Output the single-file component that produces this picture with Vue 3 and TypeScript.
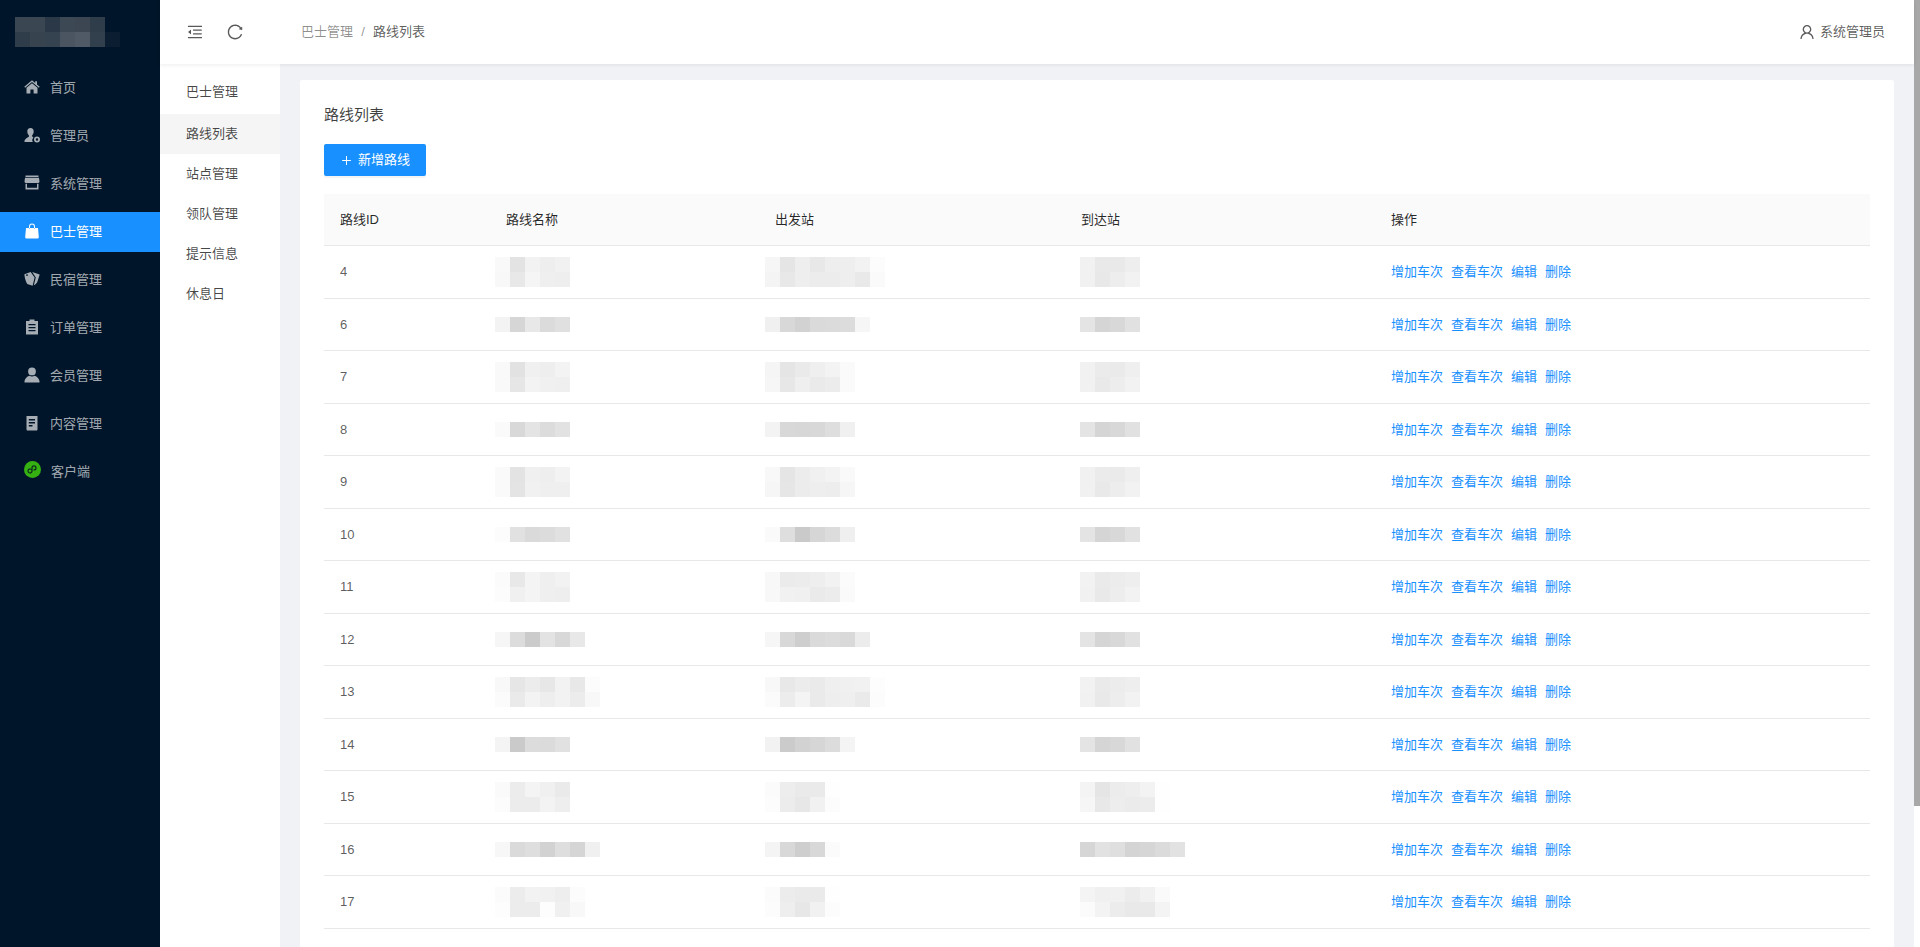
<script setup lang="ts">
import { ref } from 'vue'

// mosaics are written as gray tones, "|" starts a second line of blocks
const toColor = (t: string) => `#${t}${t}${t}`
const parseTiles = (s: string) => s.split('|').map((line) => line.split(' ').map(toColor))

const logoTiles = [
  ['#3a4753', '#3a4652', '#2b3847', '#3c4854', '#3b4652', '#2f3c49', 'transparent'],
  ['#2f3d4b', '#37434f', '#354250', '#4a5561', '#4f5a66', '#323f4c', '#0b1e31'],
]

const sideMenu = [
  { label: '首页', icon: 'M8 1.2 11.2 3.9V2.2H13V5.4L15.7 7.7 14.9 8.7 8 3 1.1 8.7.3 7.7ZM8 4.2 13.5 8.8V14.5H9.6V10.4H6.4V14.5H2.5V8.8Z' },
  { label: '管理员', icon: 'M6.5 1a3.2 3.6 0 0 1 3.2 3.6c0 1.6-.7 3-1.6 3.8v1.2c.4.2.9.4 1.3.6a4.5 4.5 0 0 0-.6 4.8H.5v-1.3c0-1.5 2.8-3 4.4-4V8.4C4 7.6 3.3 6.2 3.3 4.6A3.2 3.6 0 0 1 6.5 1ZM13 9.5a3 3 0 1 1 0 6 3 3 0 1 1 0-6ZM13 11.3a1.2 1.2 0 1 0 0 2.4 1.2 1.2 0 1 0 0-2.4Z' },
  { label: '系统管理', icon: 'M1.5.5H14.5V2H1.5ZM1 2.8H15L15.5 6.5C15.5 7.5 14.5 8 13.5 8H2.5C1.5 8 .5 7.5.5 6.5ZM1.5 8.8H3V12.8H13V8.8H14.5V14.5H1.5Z' },
  { label: '巴士管理', active: true, icon: 'M5 5.5V3.6a3 3 0 0 1 6 0V5.5H10V3.6a2 2 0 0 0-4 0V5.5ZM2 5H14L14.8 14a1.4 1.4 0 0 1-1.4 1.5H2.6A1.4 1.4 0 0 1 1.2 14Z' },
  { label: '民宿管理', icon: 'M.4 3.2 6.6.9 10.6 6.6 8.6 14.7 3.2 12.9C1.6 10 .6 6.6.4 3.2ZM3 3.2a.9.9 0 1 0 0 1.8.9.9 0 1 0 0-1.8ZM8.2 1 15.7 3.4 13.2 11.2C12.6 12.4 11.2 13.4 9.8 14.3L11.8 6.4Z' },
  { label: '订单管理', icon: 'M5.5.5H10.5V2H14V15.5H2V2H5.5ZM4.5 5V6.2H11.5V5ZM4.5 8V9.2H11.5V8ZM4.5 11V12.2H11.5V11Z' },
  { label: '会员管理', icon: 'M8 .5a3.9 3.9 0 1 1 0 7.8 3.9 3.9 0 1 1 0-7.8ZM5.3 8.8C6.8 9.8 9.2 9.8 10.7 8.8 13 9.6 15 11.5 15.5 14V15.5H.5V14C1 11.5 3 9.6 5.3 8.8Z' },
  { label: '内容管理', icon: 'M2.5 1H13.5V14.5C13.5 15 13 15.5 12.5 15.5H3.5C3 15.5 2.5 15 2.5 14.5ZM4.8 4V5.4H11V4ZM4.8 7V8.4H11V7ZM4.8 10V11.4H8.5V10Z' },
  { label: '客户端', mini: true },
]

const subMenu = ['巴士管理', '路线列表', '站点管理', '领队管理', '提示信息', '休息日']
const activeSub = ref('路线列表')

const routes = [
  { id: 4, name: 'f9 e3 f2 ee f1|f8 e8 f5 ef ee', from: 'f6 e5 ee e8 ee ee f2 fc|f4 e8 ee ec ec ee e9 fa', to: 'f1 e9 e9 ee|f1 e8 ed f2' },
  { id: 6, name: 'f3 d6 e8 db e0', from: 'f0 d8 d2 da db dc f6', to: 'e4 d5 d8 e1' },
  { id: 7, name: 'f9 e2 f0 ee f3|f9 e6 f3 f0 ef', from: 'f5 e5 ea ef f3 fa|f6 e7 ef ea ec fa', to: 'f1 eb ea ef|f1 e9 ed f2' },
  { id: 8, name: 'fa d8 e4 dc e2', from: 'f3 d8 d7 d8 de f0', to: 'e4 d5 d8 e1' },
  { id: 9, name: 'fa e3 f0 ee f3|fa e4 f1 ef ef', from: 'f8 e5 ec f0 f3 f9|f6 e6 ec ee ed f6', to: 'f1 eb ea ef|f1 e9 ed f2' },
  { id: 10, name: 'fc e1 da dc e1', from: 'fa de ca d6 dc ef', to: 'e4 d5 d8 e1' },
  { id: 11, name: 'fb e8 f4 ef f2|fc f0 f4 ef ee', from: 'f8 eb ec ee f2 fb|f8 f1 f0 ea ec fa', to: 'f2 ea ec ee|f1 e9 ed f2' },
  { id: 12, name: 'f6 dc cb e3 d8 e8', from: 'f6 d8 ce da dc d9 ec', to: 'e4 d5 d8 e1' },
  { id: 13, name: 'f8 e6 ec e7 f2 e8 fc|fb ea f3 ee f2 ec f8', from: 'f8 e8 ec ea ef f0 f1 fd|fb ec f4 ea ee ef ea fc', to: 'f2 ea ec ee|f1 e9 ed f2' },
  { id: 14, name: 'f4 ca dc db e1', from: 'f2 cb d2 d6 dc f4', to: 'e4 d5 d8 e1' },
  { id: 15, name: 'fa ec f4 f0 ea|fc ec ec f3 ee', from: 'fb ed ea ea fe|fc ec e7 f1 fc', to: 'f4 e5 ec ee f3 fe|f6 e8 ed eb ec fe' },
  { id: 16, name: 'f7 da de d2 de d5 f0', from: 'f4 d8 ce d8 fb', to: 'd6 e2 df d4 d6 db e2' },
  { id: 17, name: 'fb ec f2 f1 ee fc|fd ec ec fd f0 f8', from: 'fb ec ea ea fe|fc ee e7 f1 fc', to: 'f4 f0 f1 ec f1 fa|fb f3 ec e9 e9 f4' },
]

const actions = ['增加车次', '查看车次', '编辑', '删除']
</script>

<template>
  <div class="layout">
    <aside class="sider">
      <div class="logo">
        <div v-for="(line, i) in logoTiles" :key="i" class="tile-line">
          <span v-for="(c, j) in line" :key="j" class="tile" :style="{ background: c }"></span>
        </div>
      </div>
      <nav class="side-menu">
        <a v-for="item in sideMenu" :key="item.label" class="side-item" :class="{ active: item.active }">
          <svg v-if="item.mini" class="side-icon mini" viewBox="0 0 17 17">
            <circle cx="8.5" cy="8.5" r="8.5" fill="#35b212" />
            <path d="M6.9 8.2a2 2 0 1 0 1.1 1.9V6.9a2 2 0 1 1 2 2" fill="none" stroke="#0b2a1c" stroke-width="1.2" stroke-linecap="round" />
          </svg>
          <svg v-else class="side-icon" viewBox="0 0 16 16">
            <path :d="item.icon" fill="currentColor" fill-rule="evenodd" />
          </svg>
          <span>{{ item.label }}</span>
        </a>
      </nav>
    </aside>

    <div class="body">
      <header class="topbar">
        <div class="topbar-left">
          <svg class="top-icon" viewBox="0 0 1024 1024">
            <path fill="currentColor" d="M408 442h480c4.4 0 8-3.6 8-8v-56c0-4.4-3.6-8-8-8H408c-4.4 0-8 3.6-8 8v56c0 4.4 3.6 8 8 8zm-8 204c0 4.4 3.6 8 8 8h480c4.4 0 8-3.6 8-8v-56c0-4.4-3.6-8-8-8H408c-4.4 0-8 3.6-8 8v56zm504-486H120c-4.4 0-8 3.6-8 8v56c0 4.4 3.6 8 8 8h784c4.4 0 8-3.6 8-8v-56c0-4.4-3.6-8-8-8zm0 632H120c-4.4 0-8 3.6-8 8v56c0 4.4 3.6 8 8 8h784c4.4 0 8-3.6 8-8v-56c0-4.4-3.6-8-8-8zM115.4 518.9L271.7 642c5.8 4.6 14.4.5 14.4-6.9V388.9c0-7.4-8.5-11.5-14.4-6.9L115.4 505.1a8.74 8.74 0 0 0 0 13.8z" />
          </svg>
          <svg class="top-icon" viewBox="0 0 1024 1024">
            <path fill="currentColor" d="M909.1 209.3l-56.4 44.1C775.8 155.1 656.2 92 521.9 92 290 92 102.3 279.5 102 511.5 101.7 743.7 289.8 932 521.9 932c181.3 0 335.8-115 394.6-276.1 1.5-4.2-.7-8.9-4.9-10.3l-56.7-19.5a8 8 0 0 0-10.1 4.8c-1.8 5-3.8 10-5.9 14.9-17.3 41-42.1 77.8-73.7 109.4A344.77 344.77 0 0 1 655.9 829c-42.3 17.9-87.4 27-133.8 27-46.5 0-91.5-9.1-133.8-27A341.5 341.5 0 0 1 279 755.2a342.16 342.16 0 0 1-73.7-109.4c-17.9-42.4-27-87.4-27-133.9s9.1-91.5 27-133.9c17.3-41 42.1-77.8 73.7-109.4 31.6-31.6 68.4-56.4 109.3-73.8 42.3-17.9 87.4-27 133.8-27 46.5 0 91.5 9.1 133.8 27a341.5 341.5 0 0 1 109.3 73.8c9.9 9.9 19.2 20.4 27.8 31.4l-60.2 47a8 8 0 0 0 3 14.1l175.6 43c5 1.2 9.9-2.6 9.9-7.7l.8-180.9c-.1-6.6-7.8-10.3-13-6.2z" />
          </svg>
          <div class="crumbs">
            <span class="crumb-link">巴士管理</span>
            <span class="crumb-sep">/</span>
            <span class="crumb-current">路线列表</span>
          </div>
        </div>
        <div class="user">
          <svg class="top-icon" viewBox="0 0 1024 1024">
            <path fill="currentColor" d="M858.5 763.6a374 374 0 0 0-80.6-119.5 375.63 375.63 0 0 0-119.5-80.6c-.4-.2-.8-.3-1.2-.5C719.5 518 760 444.7 760 362c0-137-111-248-248-248S264 225 264 362c0 82.7 40.5 156 102.8 201.1-.4.2-.8.3-1.2.5-44.8 18.9-85 46-119.5 80.6a375.63 375.63 0 0 0-80.6 119.5A371.7 371.7 0 0 0 136 901.8a8 8 0 0 0 8 8.2h60c4.4 0 7.9-3.5 8-7.8 2-77.2 33-149.5 87.8-204.3 56.7-56.7 132-87.9 212.2-87.9s155.5 31.2 212.2 87.9C779 752.7 810 825 812 902.2c.1 4.4 3.6 7.8 8 7.8h60a8 8 0 0 0 8-8.2c-1-47.8-10.9-94.3-29.5-138.2zM512 534c-45.9 0-89.1-17.9-121.6-50.4S340 407.9 340 362c0-45.9 17.9-89.1 50.4-121.6S466.1 190 512 190s89.1 17.9 121.6 50.4S684 316.1 684 362c0 45.9-17.9 89.1-50.4 121.6S557.9 534 512 534z" />
          </svg>
          <span>系统管理员</span>
        </div>
      </header>

      <div class="below">
        <nav class="sub-menu">
          <a v-for="s in subMenu" :key="s" class="sub-item" :class="{ active: s === activeSub }">{{ s }}</a>
        </nav>
        <main class="content">
          <section class="card">
            <h2 class="card-title">路线列表</h2>
            <button class="add-btn" type="button">
              <svg class="plus" viewBox="0 0 1024 1024">
                <path fill="currentColor" d="M482 152h60q8 0 8 8v704q0 8-8 8h-60q-8 0-8-8V160q0-8 8-8Z" />
                <path fill="currentColor" d="M176 474h672q8 0 8 8v60q0 8-8 8H176q-8 0-8-8v-60q0-8 8-8Z" />
              </svg>
              <span>新增路线</span>
            </button>
            <table class="routes">
              <colgroup>
                <col style="width: 166px" />
                <col style="width: 269px" />
                <col style="width: 306px" />
                <col style="width: 310px" />
                <col />
              </colgroup>
              <thead>
                <tr>
                  <th>路线ID</th>
                  <th>路线名称</th>
                  <th>出发站</th>
                  <th>到达站</th>
                  <th>操作</th>
                </tr>
              </thead>
              <tbody>
                <tr v-for="r in routes" :key="r.id">
                  <td>{{ r.id }}</td>
                  <td>
                    <div class="mosaic m-name">
                      <div v-for="(line, i) in parseTiles(r.name)" :key="i" class="tile-line">
                        <span v-for="(c, j) in line" :key="j" class="tile" :style="{ background: c }"></span>
                      </div>
                    </div>
                  </td>
                  <td>
                    <div class="mosaic m-from">
                      <div v-for="(line, i) in parseTiles(r.from)" :key="i" class="tile-line">
                        <span v-for="(c, j) in line" :key="j" class="tile" :style="{ background: c }"></span>
                      </div>
                    </div>
                  </td>
                  <td>
                    <div class="mosaic m-to">
                      <div v-for="(line, i) in parseTiles(r.to)" :key="i" class="tile-line">
                        <span v-for="(c, j) in line" :key="j" class="tile" :style="{ background: c }"></span>
                      </div>
                    </div>
                  </td>
                  <td>
                    <div class="actions">
                      <a v-for="a in actions" :key="a">{{ a }}</a>
                    </div>
                  </td>
                </tr>
              </tbody>
            </table>
          </section>
        </main>
      </div>
    </div>

    <div class="scroll-track"><div class="scroll-thumb"></div></div>
  </div>
</template>

<style scoped>
.layout {
  display: flex;
  height: 100vh;
  overflow: hidden;
  font-family: "Liberation Sans", "Noto Sans CJK SC", sans-serif;
  font-size: 13px;
  line-height: 1.5;
  color: rgba(0, 0, 0, 0.65);
  background: #fff;
}
.sider {
  flex: 0 0 160px;
  background: #001529;
}
.logo {
  padding: 17px 0 17px 15px;
  height: 64px;
  box-sizing: border-box;
}
.tile-line {
  display: flex;
}
.tile {
  flex: 0 0 15px;
  width: 15px;
  height: 15px;
}
.side-menu {
  display: flex;
  flex-direction: column;
  gap: 8px;
  padding-top: 4px;
}
.side-item {
  display: flex;
  align-items: center;
  gap: 10px;
  height: 40px;
  padding-left: 24px;
  color: rgba(255, 255, 255, 0.65);
}
.side-item.active {
  background: #1890ff;
  color: #fff;
}
.side-icon {
  flex: none;
  width: 16px;
  height: 16px;
  margin-top: -2px;
}
.side-icon.mini {
  width: 17px;
  height: 17px;
  margin-top: -6px;
}
.body {
  flex: 1;
  min-width: 0;
  display: flex;
  flex-direction: column;
}
.topbar {
  position: relative;
  z-index: 2;
  flex: 0 0 64px;
  display: flex;
  align-items: center;
  justify-content: space-between;
  padding: 0 29px 0 26px;
  background: #fff;
  box-shadow: 0 1px 4px rgba(0, 21, 41, 0.08);
}
.topbar-left {
  display: flex;
  align-items: center;
  gap: 22px;
}
.top-icon {
  display: block;
  width: 18px;
  height: 18px;
  color: #595959;
}
.crumbs {
  display: flex;
  margin-left: 35px;
}
.crumb-link {
  color: rgba(0, 0, 0, 0.45);
}
.crumb-sep {
  width: 20px;
  text-align: center;
  color: rgba(0, 0, 0, 0.45);
}
.crumb-current {
  color: rgba(0, 0, 0, 0.65);
}
.user {
  display: flex;
  align-items: center;
  gap: 4px;
}
.below {
  flex: 1;
  min-height: 0;
  display: flex;
}
.sub-menu {
  flex: 0 0 120px;
  display: flex;
  flex-direction: column;
  padding-top: 8px;
  background: #fff;
}
.sub-item {
  height: 40px;
  padding-left: 26px;
  line-height: 40px;
  color: rgba(0, 0, 0, 0.72);
}
.sub-item:first-child {
  height: 42px;
  line-height: 40px;
}
.sub-item.active {
  background: #f5f5f5;
}
.content {
  flex: 1;
  min-width: 0;
  display: flex;
  padding: 16px 20px 0;
  background: #f0f2f5;
}
.card {
  flex: 1;
  min-width: 0;
  padding: 24px 24px 0;
  background: #fff;
  border-radius: 2px 2px 0 0;
}
.card-title {
  margin: 0 0 17.5px;
  font-size: 15px;
  font-weight: 400;
  color: rgba(0, 0, 0, 0.75);
}
.add-btn {
  display: flex;
  align-items: center;
  gap: 5px;
  height: 32px;
  margin-bottom: 17.5px;
  padding: 0 16px;
  border: 0;
  border-radius: 2px;
  background: #1890ff;
  color: #fff;
  font: inherit;
  box-shadow: 0 2px 0 rgba(0, 0, 0, 0.045);
}
.plus {
  width: 13px;
  height: 13px;
}
.routes {
  width: 100%;
  table-layout: fixed;
  border-collapse: separate;
  border-spacing: 0;
}
.routes th,
.routes td {
  padding: 16px;
  text-align: left;
  border-bottom: 1px solid #e8e8e8;
}
.routes th {
  background: #fafafa;
  font-weight: 400;
  color: rgba(0, 0, 0, 0.85);
}
.mosaic {
  display: flex;
  flex-direction: column;
  justify-content: center;
  height: 19.5px;
}
.m-name {
  margin-left: -11px;
}
.m-from {
  margin-left: -10px;
}
.m-to {
  margin-left: -1px;
}
.actions {
  display: flex;
  gap: 8px;
}
.actions a {
  color: #1890ff;
}
.scroll-track {
  flex: 0 0 6px;
  background: #fff;
}
.scroll-thumb {
  height: 806px;
  background: #a8a8a8;
}
</style>

<style>
body {
  margin: 0;
}
</style>
